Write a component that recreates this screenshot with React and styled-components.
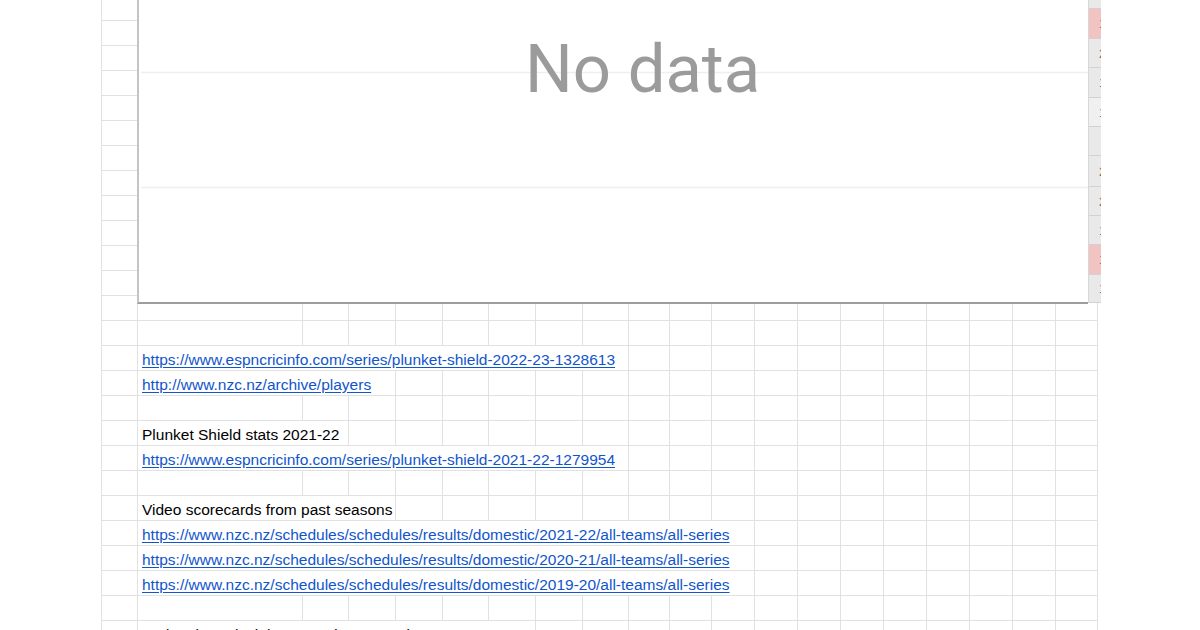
import React from 'react'
import styled, { createGlobalStyle } from 'styled-components'

const COLS = [36, 165, 46, 47, 47, 46, 47, 47, 46, 41, 42, 43, 43, 43, 43, 43, 43, 43, 43, 42]
const GRID = COLS.map((w) => `${w}px`).join(' ')

// row index -> content; span = how many columns the text overflows into
const ROWS = {
  14: { text: 'https://www.espncricinfo.com/series/plunket-shield-2022-23-1328613', link: true, span: 8 },
  15: { text: 'http://www.nzc.nz/archive/players', link: true, span: 3 },
  17: { text: 'Plunket Shield stats 2021-22', span: 2 },
  18: { text: 'https://www.espncricinfo.com/series/plunket-shield-2021-22-1279954', link: true, span: 8 },
  20: { text: 'Video scorecards from past seasons', span: 3 },
  21: { text: 'https://www.nzc.nz/schedules/schedules/results/domestic/2021-22/all-teams/all-series', link: true, span: 11 },
  22: { text: 'https://www.nzc.nz/schedules/schedules/results/domestic/2020-21/all-teams/all-series', link: true, span: 11 },
  23: { text: 'https://www.nzc.nz/schedules/schedules/results/domestic/2019-20/all-teams/all-series', link: true, span: 11 },
  25: { text: 'National Provincial stats and scorecards 2021-22', span: 6 },
}

const STRIP = [
  { h: 29, v: '1' },
  { h: 30, v: '1', pink: true },
  { h: 29, v: '2' },
  { h: 30, v: '1' },
  { h: 29, v: '1', light: true },
  { h: 29, v: '' },
  { h: 31, v: '2' },
  { h: 29, v: '2' },
  { h: 29, v: '1' },
  { h: 30, v: '1', pink: true },
  { h: 28, v: '1' },
]

const Global = createGlobalStyle`
  html, body {
    margin: 0;
    padding: 0;
    background: #fff;
  }
  body {
    font-family: "Liberation Sans", Arial, sans-serif;
  }
`

const Page = styled.div`
  position: relative;
  width: 1200px;
  height: 630px;
  overflow: hidden;
  background: #fff;
`

const Sheet = styled.div`
  margin: -4px 0 0 101px;
  width: fit-content;
  border-left: 1px solid #e1e1e1;
`

const Row = styled.div`
  display: grid;
  grid-template-columns: ${GRID};
  height: 25px;
`

const Cell = styled.div`
  box-sizing: border-box;
  grid-column: span ${(p) => p.$span || 1};
  border-right: 1px solid #e1e1e1;
  border-bottom: 1px solid #e1e1e1;
  padding: 4px 4px 0;
  font-size: 15.5px;
  line-height: 20px;
  white-space: nowrap;
  overflow: hidden;
  color: #000;
`

const Link = styled.a`
  color: #1155cc;
  text-decoration: underline;
  text-underline-offset: 2px;
`

const Chart = styled.div`
  position: absolute;
  left: 137px;
  top: -20px;
  width: 951px;
  height: 324px;
  box-sizing: border-box;
  background: #fff;
  border-left: 2px solid #c4c4c4;
  border-bottom: 2px solid #9d9d9d;
`

const Gridlines = styled.svg`
  position: absolute;
  inset: 0;
  width: 100%;
  height: 100%;
`

const NoData = styled.div`
  position: absolute;
  left: 386px;
  top: 49px;
  font-family: Roboto, "Liberation Sans", sans-serif;
  font-size: 67px;
  line-height: 80px;
  color: #9b9b9b;
`

const Strip = styled.div`
  position: absolute;
  left: 1088px;
  top: -20px;
  width: 13px;
  display: flex;
  flex-direction: column;
  background: #e9e9e9;
  border-left: 1px solid #d8d8d8;
  box-sizing: border-box;
`

const StripCell = styled.div`
  height: ${(p) => p.$h}px;
  box-sizing: border-box;
  border-bottom: 1px solid #d2d2d2;
  background: ${(p) => (p.$pink ? '#f2c4c1' : p.$light ? '#f0f0f0' : '#e9e9e9')};
  padding-left: 10px;
  overflow: hidden;
  font-size: 13px;
  line-height: ${(p) => p.$h}px;
  color: #8a6a55;
  white-space: nowrap;
`

const SheetRow = ({ data }) => {
  if (!data) {
    return (
      <Row>
        {COLS.map((_, i) => <Cell key={i} />)}
      </Row>
    )
  }
  const rest = COLS.length - 1 - data.span
  return (
    <Row>
      <Cell />
      <Cell $span={data.span}>
        {data.link ? <Link href={data.text}>{data.text}</Link> : data.text}
      </Cell>
      {Array.from({ length: rest }).map((_, i) => <Cell key={i} />)}
    </Row>
  )
}

const App = () => {
  return (
    <Page>
      <Global />
      <Sheet>
        {Array.from({ length: 27 }).map((_, i) => (
          <SheetRow key={i} data={ROWS[i]} />
        ))}
      </Sheet>

      <Chart>
        <Gridlines>
          <line x1="2" x2="951" y1="92.5" y2="92.5" stroke="#efefef" strokeWidth="1.5" />
          <line x1="2" x2="951" y1="207.5" y2="207.5" stroke="#efefef" strokeWidth="1.5" />
        </Gridlines>
        <NoData>No data</NoData>
      </Chart>

      <Strip>
        {STRIP.map((c, i) => (
          <StripCell key={i} $h={c.h} $pink={c.pink} $light={c.light}>{c.v}</StripCell>
        ))}
      </Strip>
    </Page>
  )
}

export default App
